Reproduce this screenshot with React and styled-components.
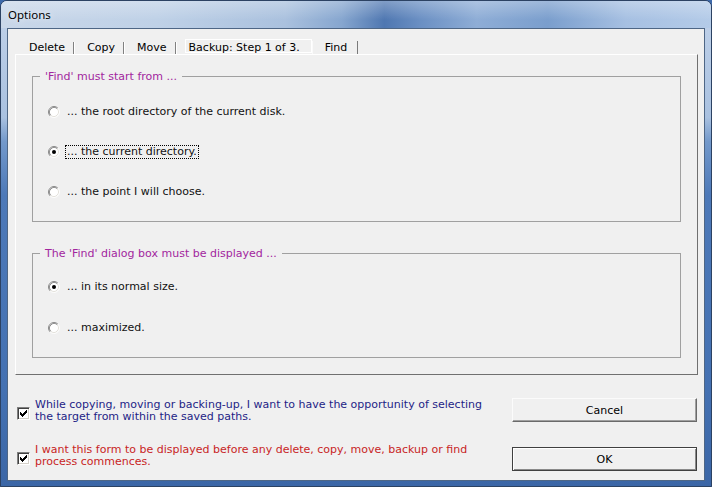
import React from 'react';
import styled, { createGlobalStyle } from 'styled-components';

const Global = createGlobalStyle`
  html, body { margin: 0; padding: 0; background: #3d69aa; }
  body { font-family: "DejaVu Sans", Verdana, sans-serif; font-size: 11px; }
  * { box-sizing: border-box; }
`;

const Window = styled.div`
  width: 712px;
  height: 487px;
  display: flex;
  flex-direction: column;
  border: 1px solid #2c4263;
  border-radius: 7px 7px 0 0;
  overflow: hidden;
  background: linear-gradient(180deg, #c2d3ea 0%, #a9c1e0 24%, #7399cb 29%, #4d79b8 40%, #4471b2 80%, #3b66a6 100%);
`;

const TitleBar = styled.div`
  height: 27px;
  flex: none;
  display: flex;
  align-items: center;
  padding-left: 7px;
  background:
    linear-gradient(180deg, rgba(255,255,255,0.28), rgba(255,255,255,0) 70%),
    linear-gradient(90deg, #c9d7e9 0%, #bfd1e7 22%, #aac1de 40%, #86a6cf 48%, #4f77b1 54%, #6a8fc3 59%, #8eadd6 67%, #7a9ecd 77%, #a6c0e2 88%, #b4cbe8 100%);
`;

const Title = styled.span`
  font-family: "Noto Sans", "Segoe UI", sans-serif;
  font-size: 11.5px;
  color: #000;
  text-shadow: 0 0 6px rgba(255,255,255,0.9);
`;

const Client = styled.div`
  flex: 1;
  margin: 0 6px 5px;
  border: 1px solid #4e6685;
  background: #f0f0f0;
  display: flex;
  flex-direction: column;
`;

const TabStrip = styled.div`
  height: 16px;
  margin: 9px 0 0 9px;
  display: flex;
  align-items: flex-end;
  flex: none;
`;

const Tab = styled.div`
  height: ${p => (p.$hot || p.$selected ? '14px' : '16px')};
  display: flex;
  align-items: center;
  line-height: 13px;
  color: #000;
  white-space: nowrap;
  padding: ${p => (p.$hot ? '3px 11px 0 3px' : p.$selected ? '0 10px 1px 12px' : '3px 8px 0 12px')};
  margin-left: ${p => (p.$hot ? '8px' : '0')};
  margin-bottom: ${p => (p.$hot ? '1px' : p.$selected ? '-1px' : '0')};
  border: ${p => (p.$hot ? '1px solid #fff' : 'none')};
  border-right: ${p => (p.$selected ? '1px solid #7a7a7a' : p.$hot ? '1px solid #fff' : 'none')};
  border-left: ${p => (p.$selected ? '1px solid #fafafa' : p.$hot ? '1px solid #fff' : 'none')};
`;

const Sep = styled.span`
  width: 2px;
  height: 12px;
  align-self: center;
  margin-top: 3px;
  border-left: 1px solid #808080;
  border-right: 1px solid #fff;
`;

const TabPage = styled.div`
  flex: none;
  height: 321px;
  margin: 0 6px 0 7px;
  border: 1px solid;
  border-color: #fff #707070 #707070 #fff;
  padding: 21px 16px 0 16px;
  display: flex;
  flex-direction: column;
  gap: 31px;
`;

const Group = styled.div`
  position: relative;
  height: ${p => p.$h}px;
  border: 1px solid #a0a0a0;
  padding: ${p => p.$pt}px 15px 0;
  display: flex;
  flex-direction: column;
  gap: ${p => p.$gap}px;
`;

const GroupTitle = styled.span`
  position: absolute;
  left: 7px;
  top: -7px;
  padding: 0 5px;
  background: #f0f0f0;
  line-height: 13px;
  color: #a2269e;
`;

const RadioRow = styled.div`
  display: flex;
  align-items: center;
  gap: 5px;
  height: 14px;
`;

const RadioLabel = styled.span`
  padding: 0 1px;
  line-height: 12px;
  border: 1px dotted ${p => (p.$focus ? '#000' : 'transparent')};
  color: #111;
  white-space: nowrap;
`;

const Footer = styled.div`
  flex: 1;
  display: grid;
  grid-template-columns: 1fr 185px;
  row-gap: 20px;
  align-content: start;
  align-items: start;
  padding: 23px 7px 0 9px;
`;

const CheckRow = styled.div`
  display: flex;
  align-items: flex-start;
  gap: 5px;
`;

const CheckBox = styled.span`
  flex: none;
  width: 13px;
  height: 13px;
  margin-top: 9px;
  border: 1px solid;
  border-color: #808080 #fff #fff #808080;
  box-shadow: inset 1px 1px #404040, inset -1px -1px #d4d0c8;
  background: #fff;
  display: flex;
  align-items: center;
  justify-content: center;
`;

const CheckText = styled.span`
  line-height: 12px;
  padding-top: 1px;
  color: ${p => p.$color};
  white-space: nowrap;
`;

const Button = styled.button`
  height: 24px;
  margin-top: ${p => (p.$default ? '4px' : '0')};
  font-family: "DejaVu Sans", Verdana, sans-serif;
  font-size: 11px;
  color: #000;
  background: #f0f0f0;
  padding: 0;
  border: 1px solid;
  border-color: ${p => (p.$default ? '#404040' : '#fbfbfb #6a6a6a #6a6a6a #fbfbfb')};
  box-shadow: ${p => (p.$default ? 'inset 1px 1px #fff, inset -1px -1px #8a8a8a' : 'inset -1px -1px #a0a0a0')};
`;

const Radio = ({ checked }) => (
  <svg width="12" height="12" viewBox="0 0 12 12" style={{ flex: 'none' }}>
    <circle cx="6" cy="6" r="5" fill="#fff" />
    <path d="M2.11 9.89 A5.5 5.5 0 0 1 9.89 2.11" fill="none" stroke="#8a8a8a" strokeWidth="1" />
    <path d="M9.89 2.11 A5.5 5.5 0 0 1 2.11 9.89" fill="none" stroke="#fdfdfd" strokeWidth="1" />
    <path d="M2.82 9.18 A4.5 4.5 0 0 1 9.18 2.82" fill="none" stroke="#404040" strokeWidth="1" opacity="0.55" />
    <path d="M9.18 2.82 A4.5 4.5 0 0 1 2.82 9.18" fill="none" stroke="#e4e2dc" strokeWidth="1" />
    {checked && <circle cx="6" cy="6" r="2" fill="#000" />}
  </svg>
);

const Check = () => (
  <svg width="7" height="7" viewBox="0 0 7 7">
    <path d="M0 2h1v3H0zM1 3h1v3H1zM2 4h1v3H2zM3 3h1v3H3zM4 2h1v3H4zM5 1h1v3H5zM6 0h1v3H6z" fill="#000" />
  </svg>
);

export default function App() {
  return (
    <>
      <Global />
      <Window>
        <TitleBar>
          <Title>Options</Title>
        </TitleBar>
        <Client>
          <TabStrip>
            <Tab>Delete</Tab>
            <Sep />
            <Tab>Copy</Tab>
            <Sep />
            <Tab>Move</Tab>
            <Sep />
            <Tab $hot>Backup: Step 1 of 3.</Tab>
            <Tab $selected>Find</Tab>
          </TabStrip>
          <TabPage>
            <Group $h={146} $pt={28} $gap={26}>
              <GroupTitle>'Find' must start from ...</GroupTitle>
              <RadioRow>
                <Radio />
                <RadioLabel>... the root directory of the current disk.</RadioLabel>
              </RadioRow>
              <RadioRow>
                <Radio checked />
                <RadioLabel $focus>... the current directory.</RadioLabel>
              </RadioRow>
              <RadioRow>
                <Radio />
                <RadioLabel>... the point I will choose.</RadioLabel>
              </RadioRow>
            </Group>
            <Group $h={105} $pt={26} $gap={27}>
              <GroupTitle>The 'Find' dialog box must be displayed ...</GroupTitle>
              <RadioRow>
                <Radio checked />
                <RadioLabel>... in its normal size.</RadioLabel>
              </RadioRow>
              <RadioRow>
                <Radio />
                <RadioLabel>... maximized.</RadioLabel>
              </RadioRow>
            </Group>
          </TabPage>
          <Footer>
            <CheckRow>
              <CheckBox><Check /></CheckBox>
              <CheckText $color="#1e1e86">
                While copying, moving or backing-up, I want to have the opportunity of selecting
                <br />
                the target from within the saved paths.
              </CheckText>
            </CheckRow>
            <Button>Cancel</Button>
            <CheckRow>
              <CheckBox><Check /></CheckBox>
              <CheckText $color="#c8251f">
                I want this form to be displayed before any delete, copy, move, backup or find
                <br />
                process commences.
              </CheckText>
            </CheckRow>
            <Button $default>OK</Button>
          </Footer>
        </Client>
      </Window>
    </>
  );
}
